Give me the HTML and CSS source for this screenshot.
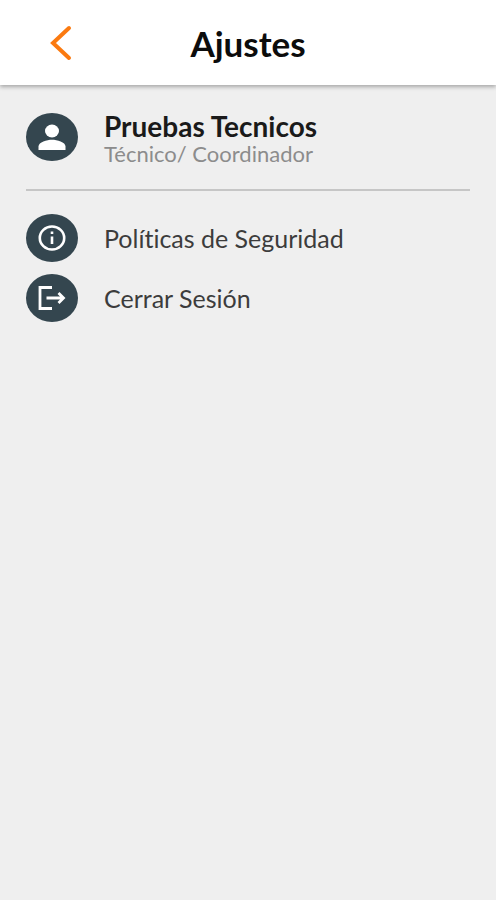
FILE: index.html
```html
<!DOCTYPE html>
<html lang="es">
<head>
  <meta charset="utf-8">
  <meta name="viewport" content="width=device-width, initial-scale=1">
  <title>Ajustes</title>
  <link rel="stylesheet" href="styles.css">
</head>
<body>
  <header class="topbar">
    <button class="back" type="button" aria-label="Volver">
      <svg width="24" height="36" viewBox="0 0 24 36" fill="none" stroke="#fb7a10" stroke-width="4" stroke-linecap="round" stroke-linejoin="miter"><path d="M21 3 5 18 21 33"/></svg>
    </button>
    <h1 class="title">Ajustes</h1>
  </header>
  <main class="content">
    <section class="profile">
      <span class="badge">
        <svg width="52" height="48" viewBox="0 0 52 48" fill="#fff"><ellipse cx="26" cy="18" rx="7" ry="6.500"/><path d="M12.500 37v-3.500c0-4.500 8.500-6.800 13.500-6.800s13.500 2.300 13.500 6.800V37z"/></svg>
      </span>
      <div class="person">
        <h2 class="name">Pruebas Tecnicos</h2>
        <p class="role">Técnico/ Coordinador</p>
      </div>
    </section>
    <nav class="menu">
      <a class="item" href="#politicas">
        <span class="badge">
          <svg width="52" height="48" viewBox="0 0 52 48" fill="none" stroke="#fff" stroke-width="2.600"><ellipse cx="26" cy="24" rx="12.200" ry="11.500"/><path d="M26 22.500v7.500M26 17.500v2.600"/></svg>
        </span>
        <span>Políticas de Seguridad</span>
      </a>
      <a class="item" href="#salir">
        <span class="badge">
          <svg width="52" height="48" viewBox="0 0 52 48" fill="none" stroke="#fff" stroke-width="2.800"><path d="M26 13.500H14v21h12M20.500 24H37M32.500 19l5 5-5 5"/></svg>
        </span>
        <span>Cerrar Sesión</span>
      </a>
    </nav>
  </main>
</body>
</html>
```
FILE: styles.css
```css
* {
  box-sizing: border-box;
}

body {
  margin: 0;
  min-height: 100vh;
  background: #efefef;
  color: #333;
  font-family: Lato, "Liberation Sans", sans-serif;
  font-variant-ligatures: none;
}

h1, h2, p {
  margin: 0;
}

svg {
  display: block;
}

.topbar {
  display: grid;
  grid-template-columns: 1fr auto 1fr;
  align-items: center;
  height: 85px;
  padding: 0 48px;
  background: #fff;
  box-shadow: 0 2px 4px rgba(0, 0, 0, 0.3);
}

.back {
  justify-self: start;
  padding: 0;
  border: 0;
  background: none;
  cursor: pointer;
}

.title {
  color: #0c0c0c;
  font-size: 35px;
  font-weight: 700;
  line-height: 44px;
}

.content {
  padding: 28px 26px;
}

.profile,
.item {
  display: flex;
  gap: 26px;
}

.profile {
  align-items: flex-start;
  padding-bottom: 22px;
  border-bottom: 2px solid #c6c6c6;
}

.badge {
  flex: none;
  border-radius: 50%;
  background: #34464f;
}

.name {
  color: #1a1a1a;
  font-size: 28px;
  font-weight: 700;
  line-height: 27px;
}

.role {
  color: #8c8c8c;
  font-size: 22px;
  line-height: 27px;
}

.menu {
  display: grid;
  gap: 12px;
  padding-top: 23px;
}

.item {
  align-items: center;
  color: #3c3c3c;
  font-size: 25px;
  line-height: 30px;
  text-decoration: none;
}
```
